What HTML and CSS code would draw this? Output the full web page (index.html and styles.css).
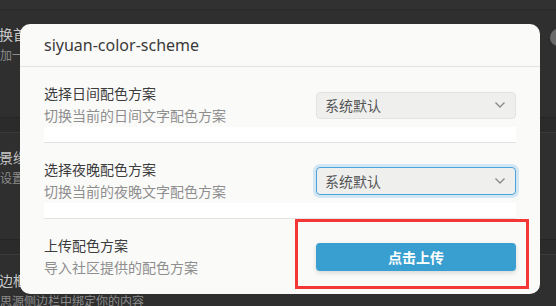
FILE: index.html
```html
<!DOCTYPE html>
<html lang="zh-CN">
<head>
    <meta charset="UTF-8">
    <title>siyuan-color-scheme</title>
    <link rel="stylesheet" href="styles.css">
</head>
<body>
    <!-- settings panel behind the dialog -->
    <div class="panel">
        <div class="topbar"></div>
        <div class="item item-first">
            <div class="item-title">换首页</div>
            <div class="item-desc">加一个</div>
        </div>
        <div class="gap"></div>
        <div class="item">
            <div class="item-title">景缘</div>
            <div class="item-desc">设置</div>
        </div>
        <div class="gap"></div>
        <div class="item item-last">
            <div class="item-title">边框</div>
            <div class="item-desc">思源侧边栏中绑定你的内容</div>
        </div>
        <span class="side-dot"></span>
    </div>

    <div class="dialog">
        <div class="dialog-header">siyuan-color-scheme</div>
        <div class="dialog-body">
            <div class="row">
                <div class="row-main">
                    <div class="row-text">
                        <div class="row-label">选择日间配色方案</div>
                        <div class="row-desc">切换当前的日间文字配色方案</div>
                    </div>
                    <div class="select">
                        <span>系统默认</span>
                        <svg width="12" height="8" viewBox="0 0 12 8"><path d="M1.5 1.5 L6 6 L10.5 1.5" fill="none" stroke="#8a8a8a" stroke-width="1.4"/></svg>
                    </div>
                </div>
                <div class="row-band"></div>
            </div>
            <div class="row">
                <div class="row-main">
                    <div class="row-text">
                        <div class="row-label">选择夜晚配色方案</div>
                        <div class="row-desc">切换当前的夜晚文字配色方案</div>
                    </div>
                    <div class="select select-focus">
                        <span>系统默认</span>
                        <svg width="12" height="8" viewBox="0 0 12 8"><path d="M1.5 1.5 L6 6 L10.5 1.5" fill="none" stroke="#8a8a8a" stroke-width="1.4"/></svg>
                    </div>
                </div>
                <div class="row-band"></div>
            </div>
            <div class="row row-last">
                <div class="row-main">
                    <div class="row-text">
                        <div class="row-label">上传配色方案</div>
                        <div class="row-desc">导入社区提供的配色方案</div>
                    </div>
                    <button class="upload-btn">点击上传</button>
                </div>
            </div>
        </div>
        <!-- highlight box -->
        <div class="highlight"></div>
    </div>
</body>
</html>
```

FILE: styles.css
```css
body {
    margin: 0;
    width: 556px;
    height: 306px;
    overflow: hidden;
    background-color: #2f2f2f;
    font-family: "Noto Sans", "Noto Sans CJK SC", sans-serif;
}

/* background panel */
.panel {
    position: relative;
    height: 306px;
    overflow: hidden;
}

.topbar {
    height: 9px;
    background-color: #313131;
    border-bottom: 1px solid #282828;
}

.item {
    height: 106px;
    padding-top: 15px;
    box-sizing: border-box;
}

.item-first {
    height: 107px;
}

.item-title {
    font-size: 14px;
    line-height: 20px;
    color: #c8c8c8;
    margin-left: -1px;
}

.item-desc {
    font-size: 12px;
    line-height: 22px;
    color: #8c8c8c;
}

.item-last {
    height: 52px;
    padding-top: 16px;
}

.gap {
    height: 14px;
    background-color: #2b2b2b;
    border-top: 1px solid #262626;
    border-bottom: 1px solid #3a3a3a;
}

.side-dot {
    position: absolute;
    left: 550px;
    top: 29px;
    width: 17px;
    height: 17px;
    border-radius: 50%;
    background-color: #6a6a6a;
}

/* dialog */
.dialog {
    position: absolute;
    left: 20px;
    top: 24px;
    width: 520px;
    height: 270px;
    background-color: #fafaf9;
    border-radius: 10px;
    overflow: hidden;
}

.dialog-header {
    height: 42px;
    line-height: 42px;
    padding-left: 24px;
    font-size: 16px;
    color: #3a3a3a;
    border-bottom: 1px solid #e3e3e1;
}

.dialog-body {
    padding: 0 24px;
}

.row {
    padding-top: 16px;
    border-bottom: 1px solid #e3e3e1;
}

.row-last {
    border-bottom: none;
}

.row-main {
    display: flex;
    align-items: center;
    justify-content: space-between;
}

.row-label {
    font-size: 14px;
    line-height: 22px;
    color: #3c3c3c;
}

.row-desc {
    font-size: 14px;
    line-height: 22px;
    color: #8e8e8e;
}

.row-band {
    height: 15px;
    background-color: #ffffff;
}

.select {
    width: 200px;
    height: 27px;
    box-sizing: border-box;
    display: flex;
    align-items: center;
    justify-content: space-between;
    padding: 0 9px 0 8px;
    background-color: #efefee;
    border: 1px solid #e2e2e0;
    border-radius: 4px;
    font-size: 14px;
    color: #555;
}

.select-focus {
    height: 28px;
    border-color: #4aa3dd;
    box-shadow: 0 0 0 3px rgba(74, 163, 221, 0.22);
}

.upload-btn {
    width: 200px;
    height: 28px;
    border: none;
    border-radius: 4px;
    background-color: #389fd0;
    color: #ffffff;
    font-family: "Noto Sans CJK SC", sans-serif;
    font-size: 14px;
    font-weight: bold;
    box-shadow: 0 2px 5px rgba(0, 0, 0, 0.14);
    cursor: pointer;
}

.highlight {
    position: absolute;
    left: 275px;
    top: 195px;
    width: 228px;
    height: 64px;
    border: 3px solid #f53636;
}
```
